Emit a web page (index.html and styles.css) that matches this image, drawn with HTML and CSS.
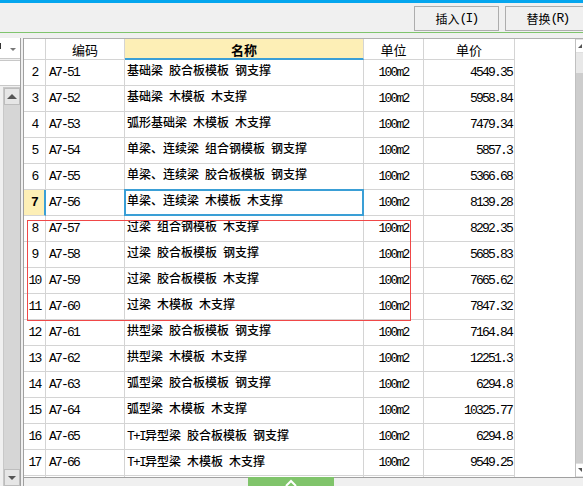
FILE: index.html
```html
<!DOCTYPE html>
<html lang="zh">
<head>
<meta charset="utf-8">
<link rel="stylesheet" href="styles.css">
</head>
<body>
<div class="topbar"></div>
<div class="toolbar">
  <button class="btn">插入<span class="m">(I)</span></button>
  <button class="btn last">替换<span class="m">(R)</span></button>
</div>
<div class="main">
  <div class="left">
    <div class="combo"><span class="combo-text"></span><span class="combo-arrow"></span></div>
    <div class="field"></div>
    <div class="lscroll">
      <div class="sbtn"><span class="tri-up"></span></div>
      <div class="ltrack"></div>
      <div class="sbtn"><span class="tri-down"></span></div>
    </div>
  </div>
  <div class="grid">
    <div class="gbody">
      <div class="table">
        <div class="row head">
          <div class="c"></div>
          <div class="c h">编码</div>
          <div class="c h hsel">名称</div>
          <div class="c h">单位</div>
          <div class="c h">单价</div>
        </div>
        <div class="row"><div class="c n">2</div><div class="c code">A7-51</div><div class="c name">基础梁 胶合板模板 钢支撑</div><div class="c unit">100m2</div><div class="c price">4549.35</div></div>
        <div class="row"><div class="c n">3</div><div class="c code">A7-52</div><div class="c name">基础梁 木模板 木支撑</div><div class="c unit">100m2</div><div class="c price">5958.84</div></div>
        <div class="row"><div class="c n">4</div><div class="c code">A7-53</div><div class="c name">弧形基础梁 木模板 木支撑</div><div class="c unit">100m2</div><div class="c price">7479.34</div></div>
        <div class="row"><div class="c n">5</div><div class="c code">A7-54</div><div class="c name">单梁、连续梁 组合钢模板 钢支撑</div><div class="c unit">100m2</div><div class="c price">5857.3</div></div>
        <div class="row"><div class="c n">6</div><div class="c code">A7-55</div><div class="c name">单梁、连续梁 胶合板模板 钢支撑</div><div class="c unit">100m2</div><div class="c price">5366.68</div></div>
        <div class="row"><div class="c n cur">7</div><div class="c code">A7-56</div><div class="c name sel">单梁、连续梁 木模板 木支撑</div><div class="c unit">100m2</div><div class="c price">8139.28</div></div>
        <div class="row"><div class="c n">8</div><div class="c code">A7-57</div><div class="c name">过梁 组合钢模板 木支撑</div><div class="c unit">100m2</div><div class="c price">8292.35</div></div>
        <div class="row"><div class="c n">9</div><div class="c code">A7-58</div><div class="c name">过梁 胶合板模板 钢支撑</div><div class="c unit">100m2</div><div class="c price">5685.83</div></div>
        <div class="row"><div class="c n">10</div><div class="c code">A7-59</div><div class="c name">过梁 胶合板模板 木支撑</div><div class="c unit">100m2</div><div class="c price">7665.62</div></div>
        <div class="row"><div class="c n">11</div><div class="c code">A7-60</div><div class="c name">过梁 木模板 木支撑</div><div class="c unit">100m2</div><div class="c price">7847.32</div></div>
        <div class="row"><div class="c n">12</div><div class="c code">A7-61</div><div class="c name">拱型梁 胶合板模板 钢支撑</div><div class="c unit">100m2</div><div class="c price">7164.84</div></div>
        <div class="row"><div class="c n">13</div><div class="c code">A7-62</div><div class="c name">拱型梁 木模板 木支撑</div><div class="c unit">100m2</div><div class="c price">12251.3</div></div>
        <div class="row"><div class="c n">14</div><div class="c code">A7-63</div><div class="c name">弧型梁 胶合板模板 钢支撑</div><div class="c unit">100m2</div><div class="c price">6294.8</div></div>
        <div class="row"><div class="c n">15</div><div class="c code">A7-64</div><div class="c name">弧型梁 木模板 木支撑</div><div class="c unit">100m2</div><div class="c price">10325.77</div></div>
        <div class="row"><div class="c n">16</div><div class="c code">A7-65</div><div class="c name"><span class="m">T+I</span>异型梁 胶合板模板 钢支撑</div><div class="c unit">100m2</div><div class="c price">6294.8</div></div>
        <div class="row"><div class="c n">17</div><div class="c code">A7-66</div><div class="c name"><span class="m">T+I</span>异型梁 木模板 木支撑</div><div class="c unit">100m2</div><div class="c price">9549.25</div></div>
        <div class="row"><div class="c n"></div><div class="c code"></div><div class="c name"></div><div class="c unit"></div><div class="c price"></div></div>
        <div class="redbox"></div>
      </div>
      <div class="vscroll">
        <div class="vbtn"><span class="tri-up small"></span></div>
        <div class="vtrack"></div>
        <div class="vthumb"></div>
        <div class="vbtn"><span class="tri-down small"></span></div>
      </div>
    </div>
    <div class="hbar">
      <div class="tab">
        <svg width="14" height="8" viewBox="0 0 14 8"><polyline points="2,7 7,2 12,7" fill="none" stroke="#fff" stroke-width="2"/></svg>
      </div>
    </div>
  </div>
</div>
</body>
</html>
```

FILE: styles.css
```css
html, body {
  margin: 0;
  padding: 0;
}
body {
  width: 583px;
  height: 486px;
  overflow: hidden;
  background: #f0f0f0;
  font-family: "Liberation Mono", "Noto Sans CJK SC", monospace;
  font-size: 12px;
  color: #000;
}
.m {
  font-size: 13px;
  letter-spacing: -1.8px;
}
.topbar {
  height: 3px;
  background: #05a6ee;
}
.toolbar {
  height: 30px;
  box-sizing: border-box;
  border-bottom: 1px solid #7fc46d;
  display: flex;
  justify-content: flex-end;
  align-items: flex-start;
  gap: 6px;
  padding-top: 3px;
  overflow: hidden;
}
.btn {
  flex: none;
  width: 85px;
  height: 25px;
  box-sizing: border-box;
  border: 1px solid #adadad;
  background: #f0f0f0;
  font-family: "Liberation Mono", "Noto Sans CJK SC", monospace;
  font-size: 12px;
  color: #000;
  padding: 0;
  display: flex;
  align-items: center;
  justify-content: center;
}
.btn.last {
  margin-right: -7px;
}
.main {
  height: 448px;
  margin-top: 5px;
  display: flex;
}
.left {
  width: 20px;
  border-right: 1px solid #a0a0a0;
  display: flex;
  flex-direction: column;
  flex: none;
}
.combo {
  height: 20px;
  background: #fff;
  border-bottom: 1px solid #c8c8c8;
  position: relative;
}
.combo-text {
  position: absolute;
  left: 0;
  top: 5px;
  width: 1px;
  height: 6px;
  background: #333;
}
.combo-arrow {
  position: absolute;
  left: 10px;
  top: 10px;
  border-left: 3px solid transparent;
  border-right: 3px solid transparent;
  border-top: 3px solid #777;
}
.field {
  height: 24px;
  margin-top: 1px;
  background: #fff;
  border-top: 1px solid #c8c8c8;
  border-bottom: 1px solid #c8c8c8;
}
.lscroll {
  flex: 1;
  margin-top: 1px;
  margin-left: 3px;
  display: flex;
  flex-direction: column;
  background: #d6d6d6;
  border-top: 1px solid #c8c8c8;
  border-left: 1px solid #c8c8c8;
}
.sbtn {
  height: 15px;
  background: #e6e6e6;
  border: 1px solid #bdbdbd;
  display: flex;
  align-items: center;
  justify-content: center;
}
.ltrack {
  flex: 1;
}
.tri-up {
  border-left: 5px solid transparent;
  border-right: 5px solid transparent;
  border-bottom: 5px solid #555;
}
.tri-down {
  border-left: 4px solid transparent;
  border-right: 4px solid transparent;
  border-top: 4px solid #555;
}
.grid {
  flex: 1;
  margin-left: 2px;
  border-left: 1px solid #a0a0a0;
  display: flex;
  flex-direction: column;
}
.gbody {
  flex: 1;
  display: flex;
  border-top: 1px solid #b0b0b0;
  background: #fff;
  overflow: hidden;
}
.table {
  flex: 1;
  position: relative;
}
.row {
  display: grid;
  grid-template-columns: 22px 79px 239px 60px 91px;
  height: 26px;
}
.row.head {
  height: 21px;
}
.c {
  box-sizing: border-box;
  border-right: 1px solid #d4d4d4;
  border-bottom: 1px solid #d4d4d4;
  line-height: 25px;
  white-space: nowrap;
  overflow: hidden;
}
.head .c {
  line-height: 22px;
}
.h {
  text-align: center;
  font-family: "Noto Sans CJK SC", sans-serif;
  font-size: 13px;
}
.hsel {
  background: #fdefb6;
  font-weight: bold;
  border-bottom: 2px solid #3a9fd6;
}
.n, .code, .unit, .price {
  font-size: 13px;
  letter-spacing: -1.8px;
}
.n {
  text-align: center;
}
.n.cur {
  background: #fdefb6;
  font-weight: bold;
  border-right: 2px solid #3a9fd6;
}
.code {
  padding-left: 3px;
}
.name {
  padding-left: 2px;
  word-spacing: -1.2px;
  font-weight: 500;
}
.name.sel {
  position: relative;
  overflow: visible;
}
.name.sel::after {
  content: "";
  position: absolute;
  left: -1px;
  top: -1px;
  right: -1px;
  bottom: -1px;
  border: 2px solid #3a9fd6;
}
.unit {
  text-align: center;
}
.price {
  text-align: right;
  padding-right: 2px;
}
.redbox {
  position: absolute;
  left: 3px;
  top: 181px;
  width: 384px;
  height: 101px;
  box-sizing: border-box;
  border: 1px solid #f04848;
}
.vscroll {
  width: 7px;
  flex: none;
  border-left: 1px solid #c0c0c0;
  display: flex;
  flex-direction: column;
  background: #e8e8e8;
}
.vbtn {
  height: 12px;
  background: #fff;
  border-top: 1px solid #e0e0e0;
  border-bottom: 1px solid #e0e0e0;
  display: flex;
  align-items: center;
  justify-content: flex-end;
  overflow: hidden;
}
.tri-up.small {
  border-left-width: 4px;
  border-right-width: 0;
  border-bottom-width: 4px;
  margin-right: 1px;
}
.tri-down.small {
  border-left-width: 4px;
  border-right-width: 0;
  border-top-width: 4px;
  margin-right: 1px;
}
.vtrack {
  height: 20px;
}
.vthumb {
  flex: 1;
  background: #cdcdcd;
}
.hbar {
  height: 8px;
  border-top: 1px solid #a0a0a0;
  background: #f0f0f0;
  display: flex;
  padding-left: 224px;
}
.tab {
  width: 86px;
  margin-top: -1px;
  background: #80c46b;
  display: flex;
  justify-content: center;
  align-items: flex-start;
  padding-top: 2px;
  overflow: hidden;
}
```
